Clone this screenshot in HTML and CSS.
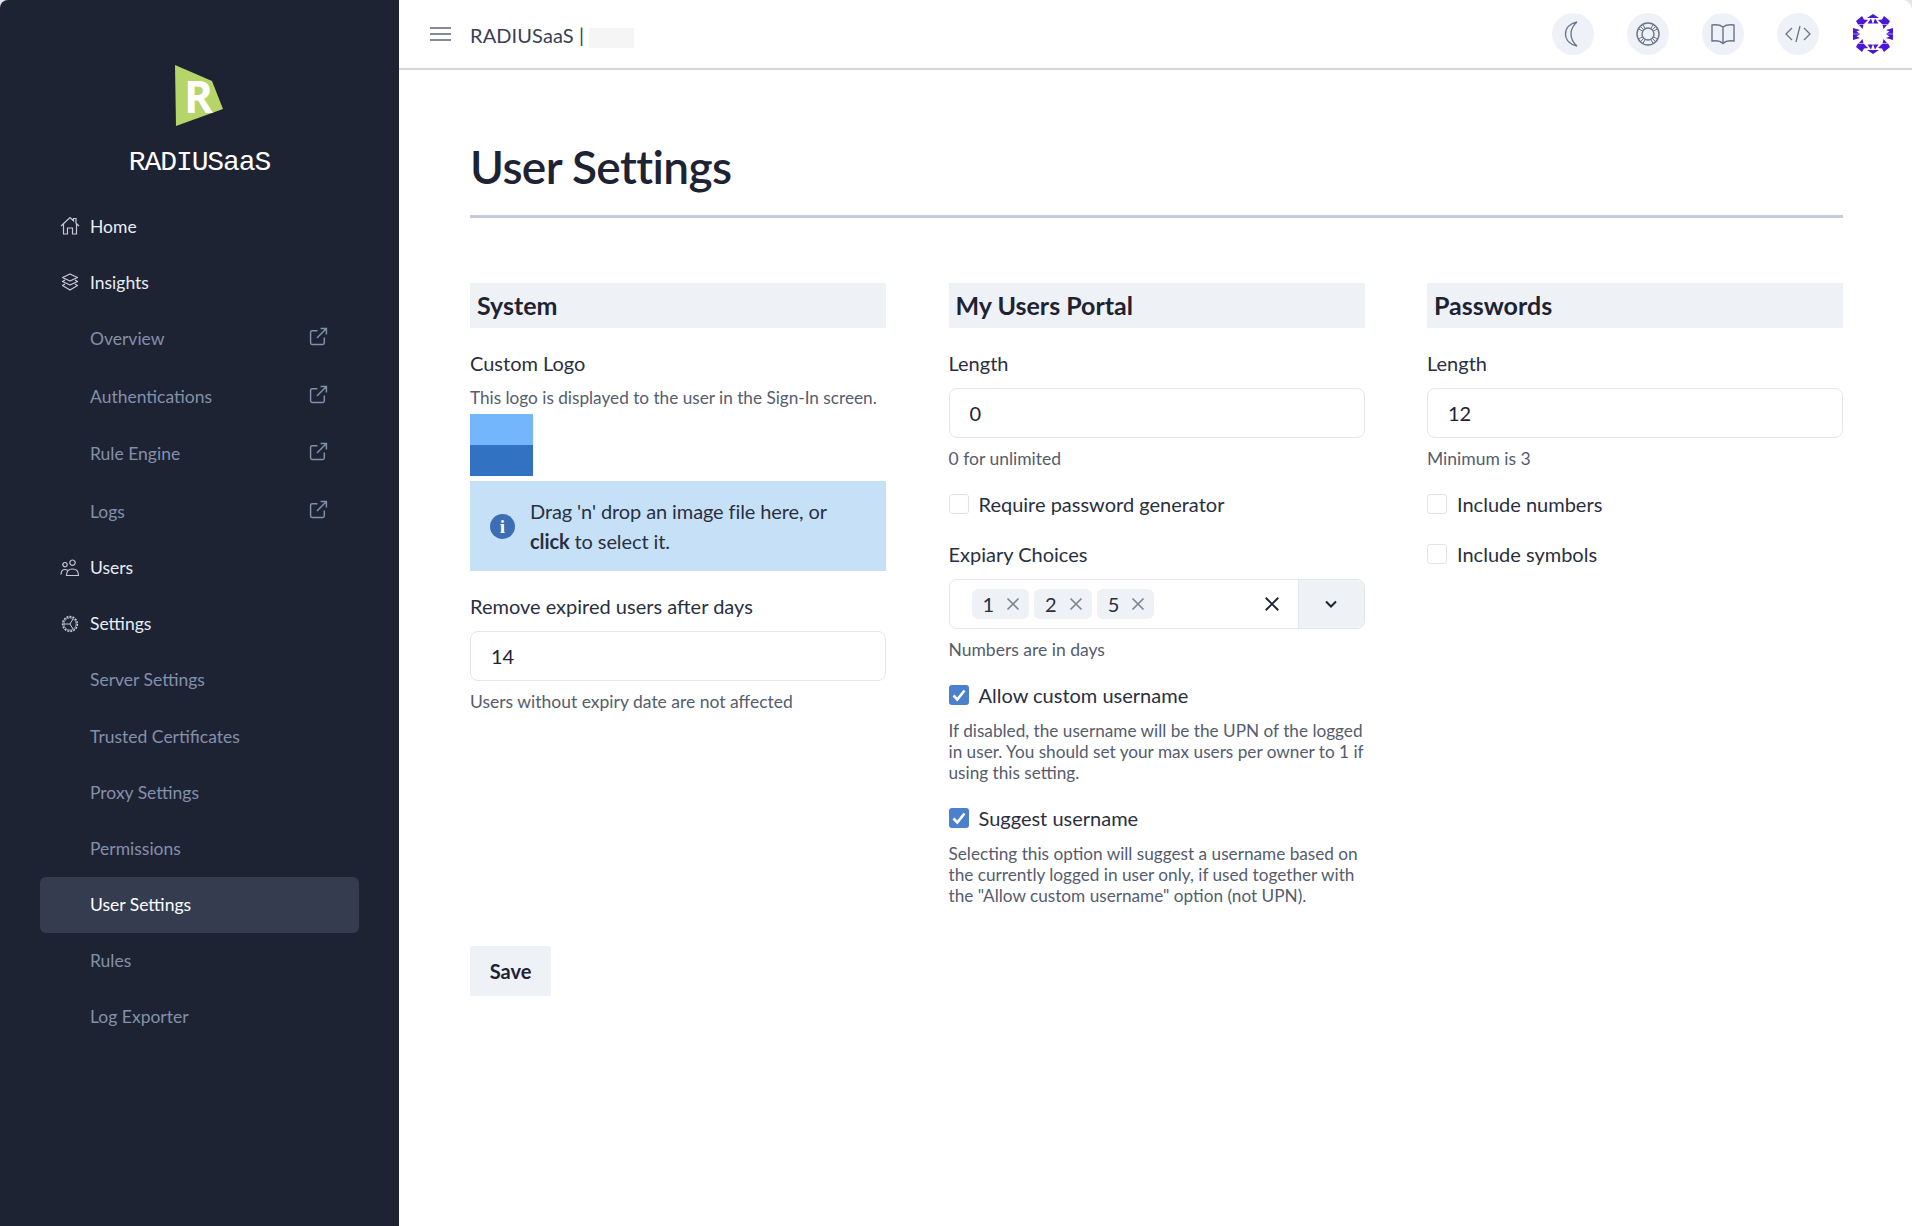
FILE: index.html
```html
<!DOCTYPE html>
<html lang="en">
<head>
    <meta charset="UTF-8">
    <meta name="viewport" content="width=device-width, initial-scale=1.0">
    <title>User Settings</title>
    <link rel="stylesheet" href="styles.css">
</head>
<body>
    <svg class="defs" width="0" height="0">
        <symbol id="ext" viewBox="0 0 18 18">
            <path d="M8 3.500H3a1.500 1.500 0 0 0-1.500 1.500v10A1.500 1.500 0 0 0 3 16.500h10a1.500 1.500 0 0 0 1.500-1.500v-5M7.500 10.500 16.500 1.500M11 1.500h5.500V7" fill="none" stroke="currentColor" stroke-width="1.400"/>
        </symbol>
        <symbol id="tick" viewBox="0 0 20 20">
            <path d="M4.500 10.500 8.300 14.500 15.500 5.500" fill="none" stroke="#fff" stroke-width="2.600"/>
        </symbol>
        <symbol id="cross" viewBox="0 0 14 14">
            <path d="M1.500 1.500 12.500 12.500M12.500 1.500 1.500 12.500" fill="none" stroke="currentColor" stroke-width="1.700"/>
        </symbol>
    </svg>

    <aside class="sidebar">
        <div class="brand">
            <svg class="brand-mark" width="50" height="62" viewBox="0 0 50 62">
                <polygon points="0,0 37,16 48,44 1,61" fill="#b5d568"/>
                <text x="9" y="48" class="brand-r">R</text>
            </svg>
            <div class="brand-name">RADIUSaaS</div>
        </div>
        <nav class="nav">
            <a class="nav-item main">
                <svg class="nav-icon" width="20" height="20" viewBox="0 0 20 20"><path d="M1 10 10 1.500l3.500 3.300V2.500h2.500v4.700L19 10M3.500 8v10H7.500v-6h5v6h4V8" fill="none" stroke="currentColor" stroke-width="1.200"/></svg>
                Home
            </a>
            <a class="nav-item main">
                <svg class="nav-icon" width="20" height="20" viewBox="0 0 20 20"><path d="M10 2 17.500 5.500 10 9 2.500 5.500ZM5 8 2.500 9.500 10 13 17.500 9.500 15 8M5 12 2.500 13.500 10 18 17.500 13.500 15 12" fill="none" stroke="currentColor" stroke-width="1.300" stroke-linejoin="round"/></svg>
                Insights
            </a>
            <a class="nav-item sub tall">Overview<svg class="ext-icon" width="19" height="19"><use href="#ext"/></svg></a>
            <a class="nav-item sub tall">Authentications<svg class="ext-icon" width="19" height="19"><use href="#ext"/></svg></a>
            <a class="nav-item sub tall">Rule Engine<svg class="ext-icon" width="19" height="19"><use href="#ext"/></svg></a>
            <a class="nav-item sub tall">Logs<svg class="ext-icon" width="19" height="19"><use href="#ext"/></svg></a>
            <a class="nav-item main">
                <svg class="nav-icon" width="20" height="20" viewBox="0 0 20 20"><path d="M5 4.500a2.200 2.200 0 1 0 .01 0ZM12.500 2a2.700 2.700 0 1 0 .01 0ZM1 16.500c0-3 1.500-5 4-5 1 0 1.800.2 2.500.8M6.500 17.500c0-4 2.300-6.500 6-6.500s6 2.500 6 6.500Z" fill="none" stroke="currentColor" stroke-width="1.200"/></svg>
                Users
            </a>
            <a class="nav-item main">
                <svg class="nav-icon" width="20" height="20" viewBox="0 0 20 20"><circle cx="10" cy="10" r="7.400" fill="none" stroke="currentColor" stroke-width="1.500" stroke-dasharray="2 1.100"/><circle cx="10" cy="10" r="6.200" fill="none" stroke="currentColor" stroke-width=".8"/><path d="M4 10h6l3-5M10 10l3 5" fill="none" stroke="currentColor" stroke-width="1"/></svg>
                Settings
            </a>
            <a class="nav-item sub">Server Settings</a>
            <a class="nav-item sub">Trusted Certificates</a>
            <a class="nav-item sub">Proxy Settings</a>
            <a class="nav-item sub">Permissions</a>
            <a class="nav-item sub active">User Settings</a>
            <a class="nav-item sub">Rules</a>
            <a class="nav-item sub">Log Exporter</a>
        </nav>
    </aside>

    <div class="main-area">
        <header class="topbar">
            <svg class="burger" width="22" height="14" viewBox="0 0 22 14"><path d="M0 1h21M0 7h21M0 13h21" stroke="#5b6478" stroke-width="1.300"/></svg>
            <div class="tenant">RADIUSaaS | <span class="tenant-mask"></span></div>
            <div class="top-actions">
                <button class="round-btn" type="button">
                    <svg width="22" height="26" viewBox="0 0 22 26"><path d="M15 1C8 2.500 3.500 7 3.500 13S8 23.500 15 25c-3.500-3-6-7-6-12s2.500-9 6-12Z" fill="none" stroke="#6b7488" stroke-width="1.300"/></svg>
                </button>
                <button class="round-btn" type="button">
                    <svg width="24" height="24" viewBox="0 0 24 24" fill="none" stroke="#6b7488" stroke-width="1.400"><circle cx="12" cy="12" r="11"/><circle cx="12" cy="12" r="6"/><path d="M4.200 4.200 7.800 7.800M7 2.500 9 6.500M2.500 7 6.500 9M19.800 4.200 16.200 7.800M17 2.500 15 6.500M21.500 7 17.500 9M4.200 19.800 7.800 16.200M7 21.500 9 17.500M2.500 17 6.500 15M19.800 19.800 16.200 16.200M17 21.500 15 17.500M21.500 17 17.500 15" stroke-width="1"/></svg>
                </button>
                <button class="round-btn" type="button">
                    <svg width="24" height="22" viewBox="0 0 24 22" fill="none" stroke="#6b7488" stroke-width="1.400"><path d="M12 4C9.500 2 5 1.500 1 2v16c4-.5 8.500 0 11 2.500C14.500 18 19 17.500 23 18V2c-4-.5-8.500 0-11 2ZM12 4v16.500"/></svg>
                </button>
                <button class="round-btn" type="button">
                    <svg width="26" height="18" viewBox="0 0 26 18" fill="none" stroke="#6b7488" stroke-width="1.300"><path d="M7 3 1 9l6 6M19 3l6 6-6 6M15 1 11 17"/></svg>
                </button>
                <svg class="avatar" width="40" height="40" viewBox="0 0 40 40" fill="#4a17d4">
                    <defs>
                        <g id="quad">
                            <polygon points="14,4 20,0 20,4"/>
                            <polygon points="14.500,9.500 18,4.500 19.800,9.500"/>
                            <polygon points="3,7 9,2 11,5.500 15,6 11,10 5,10.500"/>
                            <polygon points="6,11 10.500,10.500 9.500,15"/>
                            <polygon points="0,14 7,16 3.500,17.500 7,19.800 0,19.800"/>
                        </g>
                    </defs>
                    <use href="#quad"/>
                    <use href="#quad" transform="matrix(-1 0 0 1 40 0)"/>
                    <use href="#quad" transform="matrix(1 0 0 -1 0 40)"/>
                    <use href="#quad" transform="matrix(-1 0 0 -1 40 40)"/>
                </svg>
            </div>
        </header>

        <main class="content">
            <h1 class="page-title">User Settings</h1>

            <form class="settings-grid">
                <section class="col">
                    <h2 class="col-title">System</h2>
                    <div class="field-label">Custom Logo</div>
                    <p class="help logo-help">This logo is displayed to the user in the Sign-In screen.</p>
                    <div class="logo-preview"></div>
                    <div class="dropzone">
                        <svg class="info-icon" width="25" height="25" viewBox="0 0 25 25">
                            <circle cx="12.500" cy="12.500" r="12.500" fill="#3d6db5"/>
                            <text x="12.500" y="19" text-anchor="middle" class="info-i">i</text>
                        </svg>
                        <div class="drop-text">Drag 'n' drop an image file here, or<br><strong>click</strong> to select it.</div>
                    </div>
                    <label class="field-label expired-label" for="expireDays">Remove expired users after days</label>
                    <input class="text-input" id="expireDays" type="text" value="14">
                    <p class="help">Users without expiry date are not affected</p>
                </section>

                <section class="col">
                    <h2 class="col-title">My Users Portal</h2>
                    <label class="field-label" for="portalLength">Length</label>
                    <input class="text-input" id="portalLength" type="text" value="0">
                    <p class="help">0 for unlimited</p>
                    <div class="check-row"><span class="check"></span>Require password generator</div>
                    <div class="field-label choices-label">Expiary Choices</div>
                    <div class="multi-select">
                        <div class="tags">
                            <span class="tag">1<svg width="14" height="14"><use href="#cross"/></svg></span>
                            <span class="tag">2<svg width="14" height="14"><use href="#cross"/></svg></span>
                            <span class="tag">5<svg width="14" height="14"><use href="#cross"/></svg></span>
                        </div>
                        <svg class="clear-all" width="16" height="16" viewBox="0 0 14 14"><use href="#cross"/></svg>
                        <div class="select-arrow">
                            <svg width="14" height="9" viewBox="0 0 14 9"><path d="M2 1.500 7 6.500 12 1.500" fill="none" stroke="#1e2334" stroke-width="2"/></svg>
                        </div>
                    </div>
                    <p class="help">Numbers are in days</p>
                    <div class="check-row"><span class="check on"><svg width="20" height="20"><use href="#tick"/></svg></span>Allow custom username</div>
                    <p class="help block">If disabled, the username will be the UPN of the logged in user. You should set your max users per owner to 1 if using this setting.</p>
                    <div class="check-row suggest"><span class="check on"><svg width="20" height="20"><use href="#tick"/></svg></span>Suggest username</div>
                    <p class="help block">Selecting this option will suggest a username based on the currently logged in user only, if used together with the "Allow custom username" option (not UPN).</p>
                </section>

                <section class="col">
                    <h2 class="col-title">Passwords</h2>
                    <label class="field-label" for="pwLength">Length</label>
                    <input class="text-input" id="pwLength" type="text" value="12">
                    <p class="help">Minimum is 3</p>
                    <div class="check-row"><span class="check"></span>Include numbers</div>
                    <div class="check-row second"><span class="check"></span>Include symbols</div>
                </section>
            </form>

            <button class="save-btn" type="button">Save</button>
        </main>
    </div>
</body>
</html>
```

FILE: styles.css
```css
* {
    box-sizing: border-box;
}
html, body {
    height: 100%;
}
body {
    margin: 0;
    display: flex;
    min-height: 1226px;
    font-family: Lato, "Noto Sans", sans-serif;
    color: #1e2334;
    background-color: #e6e6e6;
}
.defs {
    position: absolute;
}

/* sidebar */
.sidebar {
    flex: 0 0 399px;
    background-color: #1e2334;
    border-top-left-radius: 8px;
    padding-top: 65px;
}
.brand {
    display: flex;
    flex-direction: column;
    align-items: center;
}
.brand-mark {
    display: block;
}
.brand-r {
    font-family: "Open Sans", sans-serif;
    font-weight: 700;
    font-size: 44px;
    fill: #fff;
}
.brand-name {
    margin-top: 18px;
    font-family: "Liberation Mono", monospace;
    font-size: 28px;
    letter-spacing: -1.100px;
    line-height: 36px;
    color: #fff;
}
.nav {
    margin-top: 18px;
    padding: 0 40px;
    display: flex;
    flex-direction: column;
}
.nav-item {
    display: flex;
    align-items: center;
    height: 56.100px;
    padding: 0 31px 2px 50px;
    font-size: 17.500px;
    border-radius: 6px;
    position: relative;
}
.nav-item.tall {
    height: 57.400px;
}
.nav-item.main {
    color: #e8edf5;
}
.nav-item.sub {
    color: #8390ab;
}
.nav-item.active {
    background-color: #353c50;
    color: #fff;
}
.nav-icon {
    position: absolute;
    left: 20px;
    color: #c4c9d4;
}
.ext-icon {
    margin-left: auto;
    margin-top: -4px;
    color: #8390ab;
}

/* top bar */
.main-area {
    flex: 1;
    min-width: 0;
    background-color: #fff;
    border-top-right-radius: 10px;
}
.topbar {
    height: 70px;
    border-bottom: 2px solid #d5d6dc;
    display: flex;
    align-items: center;
    padding: 0 19px 0 31px;
}
.burger {
    flex: none;
}
.tenant {
    margin-left: 18px;
    padding-top: 2px;
    font-size: 20px;
    letter-spacing: .1px;
    color: #3a3f52;
    display: flex;
    align-items: center;
    white-space: pre;
}
.tenant-mask {
    width: 45px;
    height: 20px;
    margin-top: 6px;
    background-color: #f5f5f5;
}
.top-actions {
    margin-left: auto;
    display: flex;
    align-items: center;
    gap: 33px;
}
.round-btn {
    width: 42px;
    height: 42px;
    padding: 0;
    border: none;
    border-radius: 50%;
    background-color: #eef1f8;
    display: flex;
    align-items: center;
    justify-content: center;
}
.avatar {
    margin-left: 1px;
}

/* content */
.content {
    padding: 0 69px 0 71px;
}
.page-title {
    margin: 0;
    padding-top: 65px;
    height: 148px;
    border-bottom: 3px solid #c6cbdc;
    font-size: 46px;
    line-height: 64px;
    font-weight: 600;
    letter-spacing: -0.6px;
}
.settings-grid {
    margin-top: 65px;
    display: grid;
    grid-template-columns: repeat(3, 416px);
    justify-content: space-between;
}
.col-title {
    margin: 0 0 19px;
    height: 45px;
    padding-left: 7px;
    background-color: #eef1f6;
    font-size: 25px;
    line-height: 45px;
    font-weight: 700;
}
.field-label {
    display: block;
    font-size: 20px;
    line-height: 32px;
    color: #2a2f40;
}
.help {
    margin: 9px 0 0;
    font-size: 17.500px;
    line-height: 24px;
    color: #555c6e;
}
.help.block {
    margin-top: 9px;
    line-height: 21px;
    font-size: 17.200px;
}
.logo-help {
    margin-top: 7px;
    font-size: 17.200px;
}
.logo-preview {
    width: 63px;
    height: 62px;
    margin-top: 4px;
    background: linear-gradient(#74b6fb 50%, #3172c2 50%);
}
.dropzone {
    margin-top: 5px;
    height: 90px;
    padding-left: 20px;
    display: flex;
    align-items: center;
    gap: 15px;
    background-color: #c6e1f7;
    font-size: 20px;
    line-height: 30px;
    color: #2a2f40;
}
.drop-text {
    letter-spacing: -.1px;
}
.info-i {
    font-family: "Liberation Serif", serif;
    font-weight: 700;
    font-size: 19px;
    fill: #fff;
}
.expired-label {
    margin-top: 19px;
}
.text-input {
    display: block;
    width: 100%;
    height: 50px;
    margin-top: 9px;
    padding: 0 20px;
    border: 1px solid #e2e6ee;
    border-radius: 8px;
    background-color: #fff;
    font-family: inherit;
    font-size: 20px;
    color: #1e2334;
}
.check-row {
    display: flex;
    align-items: center;
    gap: 10px;
    margin-top: 17px;
    font-size: 20px;
    line-height: 32px;
    color: #2a2f40;
}
.check-row.second {
    margin-top: 18px;
}
.check-row.suggest {
    margin-top: 19px;
}
.check {
    flex: none;
    width: 20px;
    height: 20px;
    border: 1px solid #dfe3ea;
    border-radius: 3px;
    background-color: #fff;
}
.check.on {
    border: none;
    background-color: #4a80cd;
}
.check svg {
    display: block;
}
.choices-label {
    margin-top: 18px;
}
.multi-select {
    height: 50px;
    margin-top: 9px;
    display: flex;
    align-items: center;
    border: 1px solid #e2e6ee;
    border-radius: 8px;
    overflow: hidden;
}
.tags {
    flex: 1;
    display: flex;
    gap: 5px;
    padding-left: 22px;
}
.tag {
    height: 30px;
    padding: 0 9px 0 11px;
    display: flex;
    align-items: center;
    gap: 12px;
    border-radius: 6px;
    background-color: #eef1f6;
    font-size: 20px;
    color: #2a2f40;
}
.tag svg {
    color: #7d8494;
}
.clear-all {
    color: #1e2334;
    margin-right: 18px;
}
.select-arrow {
    width: 66px;
    height: 100%;
    display: flex;
    align-items: center;
    justify-content: center;
    background-color: #eef1f6;
    border-left: 1px solid #e2e6ee;
}
.save-btn {
    display: block;
    width: 81px;
    height: 50px;
    margin-top: 40px;
    border: none;
    border-radius: 2px;
    background-color: #eef1f6;
    font-family: inherit;
    font-size: 20px;
    font-weight: 700;
    color: #1e2334;
}
```
